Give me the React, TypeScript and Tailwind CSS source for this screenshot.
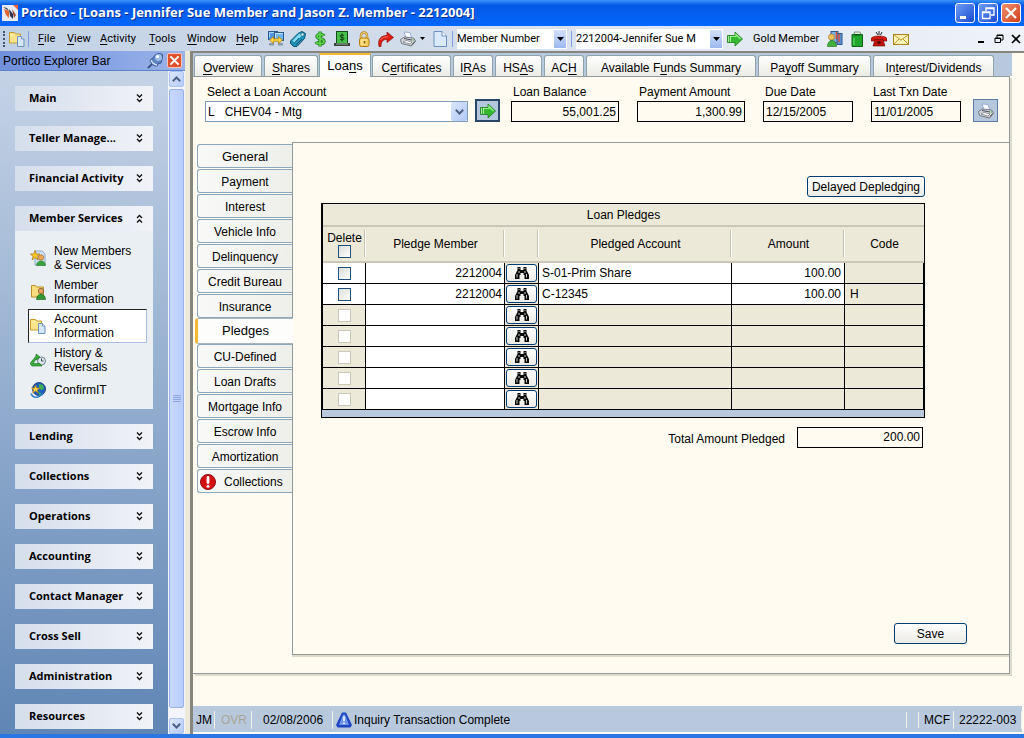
import type { ReactNode } from "react";
import clsx from "clsx";

type IconProps = { className?: string };

function Svg({ children, size = 16, className }: { children: ReactNode; size?: number; className?: string }) {
  return (
    <svg viewBox="0 0 16 16" width={size} height={size} className={clsx("shrink-0", className)} aria-hidden="true">
      {children}
    </svg>
  );
}

function LogoIcon() {
  return (
    <Svg>
      <rect width="16" height="16" fill="#e8eaf2" />
      <path d="M11 0h5v5z" fill="#f0603a" />
      <path d="M2 4l5 2v7L4 10z" fill="#e8622c" />
      <path d="M7 4l4 5v5L8 11z" fill="#2d3350" />
      <path d="M10 4l4 6-2 3z" fill="#9a4636" />
      <path d="M1 2l4 1 2 3z" fill="#39405c" />
    </Svg>
  );
}

function FoldersIcon() {
  return (
    <Svg>
      <path d="M.5 1.500h5l1 1.500h5v9H.5z" fill="#fbe38a" stroke="#c79a2e" />
      <path d="M1 4h4l1-1" stroke="#fff3b8" fill="none" />
      <path d="M8.500 5.500h4l2.500 2.500v7.500h-6.500z" fill="#d6e7fb" stroke="#6d93bf" />
      <path d="M12.500 5.500v2.500h2.500" fill="#fff" stroke="#6d93bf" />
    </Svg>
  );
}

function ComputersIcon() {
  return (
    <Svg>
      <rect x=".5" y=".5" width="9" height="8" fill="#4f98e4" stroke="#2c5a94" />
      <path d="M1.500 6V1.500h6" stroke="#a9d6fb" fill="none" />
      <rect x="6.500" y="1.500" width="9" height="8" fill="#6db4f2" stroke="#2c5a94" />
      <path d="M7.500 7V2.500h7" stroke="#c4e6fd" fill="none" />
      <path d="M1 12h5v2.500H1zM10 12h5v2.500h-5z" fill="#8c9aab" />
      <path d="M1.500 9l4-3.500v2.300h5V5.500l4 3.500-4 3.500v-2.300h-5v2.300z" fill="#ffd43c" stroke="#a87a10" strokeWidth=".7" />
    </Svg>
  );
}

function TagIcon() {
  return (
    <Svg>
      <path d="M.5 10l7.500-7.500 4-2 3.500 2-1 5-7.500 8H3.500l-3-3z" fill="#1f93ba" stroke="#0d5572" />
      <path d="M2.500 9.500l7-7 2.500 2-7.500 7.500z" fill="#7fdcf0" />
      <circle cx="12.500" cy="3.500" r="1.400" fill="#fff" stroke="#0d5572" strokeWidth=".6" />
      <path d="M4 12.500l5-5.500M6 14l6-6" stroke="#0d5572" />
    </Svg>
  );
}

function DollarIcon() {
  return (
    <Svg>
      <path d="M12 5c-1-2-7-2.500-7 .500 0 3 7 1.500 7 5 0 3-7 2.500-8 .300M8 .500v15" fill="none" stroke="#1f7c1f" strokeWidth="3.400" />
      <path d="M12 5c-1-2-7-2.500-7 .500 0 3 7 1.500 7 5 0 3-7 2.500-8 .300M8 1v14" fill="none" stroke="#5fd84c" strokeWidth="1.600" />
    </Svg>
  );
}

function CashIcon() {
  return (
    <Svg>
      <rect x="2.500" y=".5" width="11" height="12" fill="#45c14b" stroke="#124f18" />
      <path d="M10 4.500c-1-1-4-1-4 .500s4 1 4 2.600-3 1.500-4 .400M8 2.500v8" fill="none" stroke="#0c3b10" />
      <path d="M0 12h16v3H0z" fill="#384338" />
      <path d="M2 13h12" stroke="#9fb59f" />
    </Svg>
  );
}

function LockIcon() {
  return (
    <Svg>
      <path d="M5 8V4.500a3 3 0 016 0V8" fill="none" stroke="#b78416" strokeWidth="2.400" />
      <path d="M5 8V4.500a3 3 0 016 0V8" fill="none" stroke="#f3dc9a" />
      <rect x="3.500" y="7" width="9.500" height="8.500" rx="2" fill="#f8cf5c" stroke="#b07a12" />
      <path d="M5 9h5M5 11h3M5 13h5" stroke="#fff2b8" />
      <path d="M8.500 10v2.500" stroke="#7d5306" strokeWidth="1.500" />
    </Svg>
  );
}

function ShareArrowIcon() {
  return (
    <Svg>
      <path d="M1 15.500C-.500 8 3 4.500 9 4.500V1l6.500 5.500L9 11.500V8.500C5 8.300 3 10.500 3 15.500z" fill="#e01c10" stroke="#8c0f08" strokeWidth=".7" />
      <path d="M2.500 9C4 6.500 6 5.800 10 5.800" fill="none" stroke="#ff8a7c" strokeWidth=".8" />
    </Svg>
  );
}

function PrinterIcon({ className }: IconProps) {
  return (
    <Svg className={className}>
      <path d="M4 1l6 .500 2 6.500-6-1z" fill="#f6faff" stroke="#8ba2c4" strokeWidth=".8" />
      <path d="M.5 8.500l4-2.500 9 1 2 3-4 5-10-2.500z" fill="#d3d5da" stroke="#5b616b" strokeWidth=".8" />
      <path d="M4 7.500l8 1.500" stroke="#4a4f58" />
      <path d="M3 11l7 2 2-2-6-1.500z" fill="#fff" stroke="#5b616b" strokeWidth=".6" />
      <path d="M12 13.500l3-3" stroke="#3d424a" />
      <path d="M12.500 9h1.500" stroke="#2fae37" />
    </Svg>
  );
}

function PageIcon() {
  return (
    <Svg>
      <path d="M2 .5h8L14.500 5v10.500H2z" fill="#dbe9fc" stroke="#6b8fc4" />
      <path d="M10 .5V5h4.500" fill="#fff" stroke="#6b8fc4" />
    </Svg>
  );
}

function GoArrowIcon() {
  return (
    <Svg>
      <path d="M.5 4.500h7.500V1L15.500 8 8 15v-3.500H.5z" fill="#33b82f" stroke="#1a7a1a" strokeWidth=".8" />
      <path d="M3 5.500h6V3.500L13.500 8" fill="none" stroke="#9df08f" strokeWidth="1.200" />
      <path d="M1.500 5v6M3.500 5v6" stroke="#c9f7c0" strokeWidth=".8" />
    </Svg>
  );
}

function PeopleIcon() {
  return (
    <Svg>
      <rect x="4" y=".5" width="7" height="11" fill="#7fb2e8" stroke="#2f578e" />
      <rect x="10" y="2.500" width="5" height="11" fill="#5a8fd0" stroke="#2f578e" />
      <path d="M9.500 1v7M12 3v8" stroke="#d8533a" strokeWidth="1.500" />
      <circle cx="4.500" cy="6" r="3" fill="#f3c25b" stroke="#a06a1f" strokeWidth=".6" />
      <path d="M.5 15.500c0-8 9-8 9 0z" fill="#3fae3b" stroke="#1c6b1a" strokeWidth=".6" />
    </Svg>
  );
}

function BagIcon() {
  return (
    <Svg>
      <path d="M4.500 5l1-4H11l1.500 4" fill="#e6efe2" stroke="#7b927b" />
      <path d="M3 3.500h10.500v12H3z" fill="#1fa52b" stroke="#0c6817" />
      <path d="M5 4h6" stroke="#0b4d12" />
      <path d="M5 7v7" stroke="#73e07c" />
    </Svg>
  );
}

function PhoneIcon() {
  return (
    <Svg>
      <path d="M0 8c0-4 16-4 16 0v2h-4V8.500H4V10H0z" fill="#d81810" stroke="#6c0905" strokeWidth=".6" />
      <path d="M4 8.500h8l2 6.500H2z" fill="#c3140d" stroke="#6c0905" strokeWidth=".6" />
      <circle cx="8" cy="11.500" r="1.800" fill="#5e0a06" />
      <path d="M5 1l2 3M8 0v4M11 1L9.500 4" stroke="#222" />
    </Svg>
  );
}

function MailIcon() {
  return (
    <Svg>
      <rect x=".5" y="3.500" width="15" height="10" fill="#fdf3b4" stroke="#a8841a" />
      <path d="M1 4l7 5 7-5M1 13l5-5M15 13l-5-5" fill="none" stroke="#c09a2a" />
    </Svg>
  );
}

function PinIcon() {
  return (
    <Svg>
      <path d="M1 15l5-5" stroke="#3b5688" strokeWidth="2" />
      <path d="M3 7c1 4 3 6 7 6l1-2 3-1 2-8-4-2-4 2-2 3z" fill="#5c82bf" stroke="#2b4a80" strokeWidth=".8" />
      <path d="M4 7c1 3 3 4.500 6 5" fill="none" stroke="#cfe0f7" strokeWidth="1.400" />
      <circle cx="11.500" cy="4.500" r="3.500" fill="#9dbbe6" />
      <circle cx="10.500" cy="3.500" r="1.600" fill="#fff" />
    </Svg>
  );
}

function BinocularsIcon() {
  return (
    <Svg>
      <path d="M3.500 2h3v3h3V2h3v3l2.500 5v4h-4.500v-4h-1V8h-3v2h-1v4H1v-4l2.500-5z" fill="#0a0a0a" />
      <path d="M4.500 3.500h1M10.500 3.500h1M3 9v3.500M12.500 9v3.500M5 6v2M11 6v2" stroke="#c4c4c4" />
    </Svg>
  );
}

function NewMemberIcon() {
  return (
    <Svg>
      <path d="M5 1h7l3 3v11H5z" fill="#cfe2f8" stroke="#8aa8cf" />
      <circle cx="11" cy="7.500" r="2.700" fill="#eea656" stroke="#9c6420" strokeWidth=".6" />
      <path d="M6.500 15.500c0-6 9-6 9 0z" fill="#37a33a" stroke="#1c6b1a" strokeWidth=".5" />
      <path d="M5 .5l1.300 3.500h3.500L7 6.300l1 3.700-3-2.300L2 10l1-3.700L.3 4h3.400z" fill="#ffc62e" stroke="#a8730a" strokeWidth=".7" />
    </Svg>
  );
}

function MemberInfoIcon() {
  return (
    <Svg>
      <path d="M1.500 1.500h4l1 1.500h7v10h-12z" fill="#f9dd7c" stroke="#bd9128" />
      <circle cx="11" cy="7" r="2.700" fill="#e7a25c" stroke="#77583a" strokeWidth=".8" />
      <path d="M6.500 15.500c0-7 9-7 9 0z" fill="#2f9a33" stroke="#1c5b1a" strokeWidth=".6" />
    </Svg>
  );
}

function HistoryIcon() {
  return (
    <Svg>
      <circle cx="11.500" cy="9" r="4" fill="#dfe7ee" stroke="#6f7f90" />
      <path d="M11.500 6.500V9h2" fill="none" stroke="#3b4855" />
      <path d="M12 14H2l-2-2.500L6 4V2l4 3-3.500 3V6.500L3 11.500h7z" fill="#36b03b" stroke="#176a1b" strokeWidth=".6" />
    </Svg>
  );
}

function GlobeIcon() {
  return (
    <Svg>
      <circle cx="9" cy="7" r="6.500" fill="#1c5fc0" stroke="#0c2c66" strokeWidth=".8" />
      <path d="M9 2l4 1 1 4-3 1-2-2zM8 10l3 1-1 3z" fill="#3fae52" />
      <path d="M5.500 3l1.200 3h3L7.300 8l1 3-2.800-2-2.800 2 1-3L1.300 6h3z" fill="#ffd34a" stroke="#a8730a" strokeWidth=".6" />
      <path d="M1 11.500c1 3 4 4 7 3.500l5-3" fill="none" stroke="#2f83c9" strokeWidth="1.500" />
    </Svg>
  );
}

function ErrorIcon() {
  return (
    <Svg>
      <circle cx="8" cy="8" r="7.500" fill="#d41010" stroke="#8b0a0a" />
      <path d="M8 3.500v5" stroke="#fff" strokeWidth="2.800" strokeLinecap="round" />
      <circle cx="8" cy="12.300" r="1.500" fill="#fff" />
    </Svg>
  );
}

function AlertIcon() {
  return (
    <Svg>
      <path d="M6 .5h4L16 13l-1.500 2.500h-13L0 13z" fill="#1f46c0" />
      <path d="M7 2.500h2L13 13H3z" fill="#6f97f0" />
      <path d="M8 4.500v4.500M8 10.500v1.500" stroke="#fff" strokeWidth="1.600" />
    </Svg>
  );
}

function DoubleChevron({ up = false }: { up?: boolean }) {
  return (
    <svg viewBox="0 0 7 9" width="7" height="9" className={clsx("shrink-0", up && "rotate-180")} aria-hidden="true">
      <path d="M1 .500l2.500 2.500L6 .500M1 5l2.500 2.500L6 5" fill="none" stroke="#111" strokeWidth="1.400" />
    </svg>
  );
}

function Chevron({ up = false }: { up?: boolean }) {
  return (
    <svg viewBox="0 0 9 6" width="9" height="6" className={up ? "rotate-180" : ""} aria-hidden="true">
      <path d="M.8 .800l3.700 3.700L8.200 .800" fill="none" stroke="#4d6185" strokeWidth="2" />
    </svg>
  );
}

// Renders a label with the character at `at` underlined as its access key.
function Mnemonic({ text, at }: { text: string; at: number }) {
  return (
    <span>
      {text.slice(0, at)}
      <span className="underline underline-offset-2">{text[at]}</span>
      {text.slice(at + 1)}
    </span>
  );
}

const MENUS = [
  { label: "File", width: "w-[29px]" },
  { label: "View", width: "w-[33px]" },
  { label: "Activity", width: "w-[49px]" },
  { label: "Tools", width: "w-[38px]" },
  { label: "Window", width: "w-[49px]" },
  { label: "Help", width: "w-[32px]" },
];

const TOOLS = [
  { name: "Connections", icon: <ComputersIcon /> },
  { name: "Tags", icon: <TagIcon /> },
  { name: "Payments", icon: <DollarIcon /> },
  { name: "Cash drawer", icon: <CashIcon /> },
  { name: "Lock", icon: <LockIcon /> },
  { name: "Forward", icon: <ShareArrowIcon /> },
];

const MEMBER_TOOLS = [
  { name: "Household", icon: <PeopleIcon /> },
  { name: "Products", icon: <BagIcon /> },
  { name: "Phone", icon: <PhoneIcon /> },
  { name: "Mail", icon: <MailIcon /> },
];

const TABS = [
  { label: "Overview", at: 0, width: "w-[68px]" },
  { label: "Shares", at: 0, width: "w-[54px]" },
  { label: "Loans", at: 3, width: "w-[52px]" },
  { label: "Certificates", at: 1, width: "w-[79px]" },
  { label: "IRAs", at: 1, width: "w-[40px]" },
  { label: "HSAs", at: 2, width: "w-[47px]" },
  { label: "ACH", at: 2, width: "w-[40px]" },
  { label: "Available Funds Summary", at: 11, width: "w-[170px]" },
  { label: "Payoff Summary", at: 2, width: "w-[113px]" },
  { label: "Interest/Dividends", at: 2, width: "w-[121px]" },
];

const SIDE_TABS = [
  "General",
  "Payment",
  "Interest",
  "Vehicle Info",
  "Delinquency",
  "Credit Bureau",
  "Insurance",
  "Pledges",
  "CU-Defined",
  "Loan Drafts",
  "Mortgage Info",
  "Escrow Info",
  "Amortization",
  "Collections",
];

const SERVICES = [
  { lines: ["New Members", "& Services"], icon: <NewMemberIcon /> },
  { lines: ["Member", "Information"], icon: <MemberInfoIcon /> },
  { lines: ["Account", "Information"], icon: <FoldersIcon />, active: true },
  { lines: ["History &", "Reversals"], icon: <HistoryIcon /> },
  { lines: ["ConfirmIT"], icon: <GlobeIcon /> },
];

const GROUPS = [
  "Main",
  "Teller Manage...",
  "Financial Activity",
  "Member Services",
  "Lending",
  "Collections",
  "Operations",
  "Accounting",
  "Contact Manager",
  "Cross Sell",
  "Administration",
  "Resources",
];

const PLEDGES = [
  { member: "2212004", account: "S-01-Prim Share", amount: "100.00", code: "" },
  { member: "2212004", account: "C-12345", amount: "100.00", code: "H" },
  null,
  null,
  null,
  null,
  null,
];

function TitleBar() {
  const button = "flex h-5 w-5 items-center justify-center rounded-[3px] border border-white";
  return (
    <header className="flex h-[26px] items-center gap-[3px] bg-linear-to-b from-[#3b93fc] via-[#0458e6] via-20% to-[#0367fd] pl-[2px] pr-[3px]">
      <LogoIcon />
      <h1 className="grow truncate font-['Open_Sans','Noto_Sans',sans-serif] text-[13px] font-bold text-white [text-shadow:1px_1px_#0b2f8f]">
        Portico - [Loans - Jennifer Sue Member and Jason Z. Member - 2212004]
      </h1>
      <button aria-label="Minimize" className={clsx(button, "bg-linear-to-br from-[#6e9bf5] to-[#1c49cf]")}>
        <Svg>
          <path d="M3 11h6v3H3z" fill="#fff" />
        </Svg>
      </button>
      <button aria-label="Restore" className={clsx(button, "bg-linear-to-br from-[#6e9bf5] to-[#1c49cf]")}>
        <Svg>
          <path d="M6 6V3h8v7h-3M6 3.500h8M2.500 7h7.500v6.500H2.500zM2 7.500h8" fill="none" stroke="#fff" strokeWidth="1.300" />
        </Svg>
      </button>
      <button aria-label="Close" className={clsx(button, "bg-linear-to-br from-[#f0906e] to-[#cf3a12]")}>
        <Svg>
          <path d="M3 3l10 10M13 3L3 13" stroke="#fff" strokeWidth="2.200" />
        </Svg>
      </button>
    </header>
  );
}

function ToolbarSelect({ label, value, className }: { label: string; value: string; className: string }) {
  return (
    <div className={clsx("relative h-5 shrink-0", className)}>
      <select aria-label={label} className="h-full w-full appearance-none bg-white pt-[2px] text-[11px] outline-none">
        <option>{value}</option>
      </select>
      <span className="pointer-events-none absolute right-px top-px flex h-[18px] w-3 items-center justify-center bg-linear-to-b from-[#d3e0fa] to-[#9db9f0]">
        <svg viewBox="0 0 7 4" width="7" height="4" aria-hidden="true">
          <path d="M0 0h7L3.500 4z" />
        </svg>
      </span>
    </div>
  );
}

function MenuBar() {
  return (
    <div className="flex h-[25px] items-center bg-linear-to-r from-[#c1d1e5] via-[#d4deec] via-45% to-[#eff3f9] font-[Roboto,'Liberation_Sans',sans-serif] text-[11px]">
      <span className="ml-[3px] mr-1 h-4 w-[2px] border-l-2 border-dotted border-[#44546b]" />
      <FoldersIcon />
      <span className="ml-[3px] mr-[9px] h-4 w-px bg-[#7f9fdc]" />
      <nav className="flex">
        {MENUS.map((menu) => (
          <button key={menu.label} className={clsx("pt-[2px] text-left", menu.width)}>
            <Mnemonic text={menu.label} at={0} />
          </button>
        ))}
      </nav>
      <div className="flex gap-[6px]">
        {TOOLS.map((tool) => (
          <button key={tool.name} aria-label={tool.name}>
            {tool.icon}
          </button>
        ))}
        <button aria-label="Print" className="flex items-center gap-1 pr-px">
          <PrinterIcon />
          <svg viewBox="0 0 5 3" width="5" height="3" aria-hidden="true">
            <path d="M0 0h5L2.500 3z" />
          </svg>
        </button>
        <button aria-label="New page">
          <PageIcon />
        </button>
      </div>
      <span className="mx-1 h-4 w-px bg-[#7f9fdc]" />
      <ToolbarSelect label="Search by" value="Member Number" className="w-[110px]" />
      <span className="mx-1 h-4 w-px bg-[#7f9fdc]" />
      <ToolbarSelect label="Member" value="2212004-Jennifer Sue M" className="w-[147px]" />
      <button aria-label="Go to member" className="ml-1">
        <GoArrowIcon />
      </button>
      <span className="ml-[10px] mr-2 shrink-0 pt-[2px]">Gold Member</span>
      <div className="flex gap-[6px]">
        {MEMBER_TOOLS.map((tool) => (
          <button key={tool.name} aria-label={tool.name}>
            {tool.icon}
          </button>
        ))}
      </div>
      <div className="ml-auto mr-[3px] flex gap-[7px]">
        <button aria-label="Minimize window">
          <svg viewBox="0 0 10 10" width="10" height="10" aria-hidden="true">
            <path d="M1 7h6v2H1z" />
          </svg>
        </button>
        <button aria-label="Restore window">
          <svg viewBox="0 0 10 10" width="10" height="10" aria-hidden="true">
            <path d="M3 4V1h6v5H7M3 1.500h6M1 4h5.500v4.500H1zM1 4.500h5.500" fill="none" stroke="#000" />
          </svg>
        </button>
        <button aria-label="Close window">
          <svg viewBox="0 0 10 10" width="10" height="10" aria-hidden="true">
            <path d="M1 1l8 8M9 1L1 9" stroke="#000" strokeWidth="1.700" />
          </svg>
        </button>
      </div>
    </div>
  );
}

function ScrollBar() {
  const arrow = "flex h-4 w-[15px] items-center justify-center rounded-[2px] border border-[#a9c1f4] bg-linear-to-br from-[#dfe8fd] to-[#b4caf8]";
  return (
    <div className="flex w-[17px] shrink-0 flex-col items-center bg-[#f4f5fc]">
      <button aria-label="Scroll up" className={arrow}>
        <Chevron up />
      </button>
      <div className="mt-[2px] mb-[10px] flex w-[15px] grow flex-col items-center justify-center gap-px rounded-[2px] border border-[#98b0ea] bg-linear-to-r from-[#c9d8fd] to-[#b9cdfa]">
        <span className="h-px w-2 bg-[#8aa5e0]" />
        <span className="h-px w-2 bg-[#8aa5e0]" />
        <span className="h-px w-2 bg-[#8aa5e0]" />
        <span className="h-px w-2 bg-[#8aa5e0]" />
      </div>
      <button aria-label="Scroll down" className={arrow}>
        <Chevron />
      </button>
    </div>
  );
}

function ExplorerBar() {
  return (
    <aside className="flex w-[185px] shrink-0 flex-col">
      <div className="flex h-5 items-center gap-1 border-b border-[#5c82cc] bg-linear-to-r from-[#7090dc] to-[#9ab2ea] pl-[3px] pr-[3px]">
        <h2 className="grow text-[12px]">Portico Explorer Bar</h2>
        <button aria-label="Auto hide">
          <PinIcon />
        </button>
        <button aria-label="Close explorer bar" className="flex h-[15px] w-[15px] items-center justify-center rounded-[2px] border border-[#f8c7b5] bg-[#e1502a]">
          <Svg size={11}>
            <path d="M2 2l12 12M14 2L2 14" stroke="#fff" strokeWidth="3" />
          </Svg>
        </button>
      </div>
      <div className="flex grow">
        <div className="flex grow flex-col gap-[15px] bg-linear-to-b from-[#c5d3e6] to-[#6086b5] px-[15px] pb-[5px] pt-[15px]">
          {GROUPS.map((group) => {
            const open = group === "Member Services";
            return (
              <section key={group}>
                <button
                  aria-expanded={open}
                  className="flex h-[25px] w-full items-center justify-between bg-linear-to-r from-[#d5deec] to-[#f1f3f8] pl-[14px] pr-[10px] font-['Open_Sans','Noto_Sans',sans-serif] text-[11px] font-bold whitespace-nowrap"
                >
                  {group}
                  <DoubleChevron up={open} />
                </button>
                {open && (
                  <ul className="bg-[#eaeff4] pb-[6px] pl-[13px] pr-[6px] pt-[10px]">
                    {SERVICES.map((item) => (
                      <li key={item.lines[0]}>
                        <a
                          href="#"
                          className={clsx(
                            "flex items-center gap-2 border pl-px text-[12px] leading-[14px]",
                            item.lines.length > 1 ? "h-[34px]" : "h-[26px]",
                            item.active ? "border-b-[#a9bfdf] border-l-[#222] border-r-[#a9bfdf] border-t-[#222] bg-white" : "border-transparent",
                          )}
                        >
                          {item.icon}
                          <span>
                            {item.lines.map((line) => (
                              <span key={line} className="block">
                                {line}
                              </span>
                            ))}
                          </span>
                        </a>
                      </li>
                    ))}
                  </ul>
                )}
              </section>
            );
          })}
        </div>
        <ScrollBar />
      </div>
    </aside>
  );
}

function LoanTabs() {
  return (
    <div role="tablist" className="flex h-[23px] items-end gap-[2px] pl-px">
      {TABS.map((tab) =>
        tab.label === "Loans" ? (
          <button
            key={tab.label}
            role="tab"
            aria-selected="true"
            className={clsx("relative -mx-px -mb-px h-6 border-x border-t-2 border-x-[#8fa3ad] border-t-[#f5b833] bg-[#fdfdfb] text-[13px]", tab.width)}
          >
            <Mnemonic text={tab.label} at={tab.at} />
          </button>
        ) : (
          <button
            key={tab.label}
            role="tab"
            aria-selected="false"
            className={clsx("h-[21px] rounded-t-[3px] border border-b-0 border-[#8fa3ad] bg-linear-to-b from-white to-[#ecece6] pt-[3px] text-[12px] whitespace-nowrap", tab.width)}
          >
            <Mnemonic text={tab.label} at={tab.at} />
          </button>
        ),
      )}
    </div>
  );
}

function ReadOnlyField({ id, label, value, className }: { id: string; label: string; value: string; className: string }) {
  return (
    <div className={className}>
      <label htmlFor={id} className="block h-[17px] pl-[2px] leading-4 whitespace-nowrap">
        {label}
      </label>
      <input
        id={id}
        readOnly
        defaultValue={value}
        className={clsx("block h-[21px] w-full border border-black bg-transparent px-[2px] outline-none", value.includes(".") && "text-right")}
      />
    </div>
  );
}

function AccountHeader() {
  return (
    <div className="flex items-end pb-5 pl-3 pt-[7px]">
      <div className="w-[263px]">
        <label htmlFor="loan-account" className="block h-[17px] pl-[2px] leading-4">
          Select a Loan Account
        </label>
        <div className="relative">
          <select id="loan-account" className="block h-[21px] w-full appearance-none border border-[#7f9db9] bg-white pl-[2px] outline-none">
            <option>{"L\u00a0\u00a0 CHEV04 - Mtg"}</option>
          </select>
          <span className="pointer-events-none absolute right-px top-px flex h-[19px] w-4 items-center justify-center rounded-[2px] bg-linear-to-br from-[#dbe6fd] to-[#b1c7f5]">
            <Chevron />
          </span>
        </div>
      </div>
      <button aria-label="Open account" className="ml-[7px] mr-[11px] flex h-[23px] w-[25px] items-center justify-center border-2 border-[#274668] bg-[#b5c7dd]">
        <GoArrowIcon />
      </button>
      <ReadOnlyField id="balance" label="Loan Balance" value="55,001.25" className="mr-[18px] w-[108px]" />
      <ReadOnlyField id="payment" label="Payment Amount" value="1,300.99" className="mr-[18px] w-[108px]" />
      <ReadOnlyField id="due" label="Due Date" value="12/15/2005" className="mr-[18px] w-[90px]" />
      <ReadOnlyField id="last-txn" label="Last Txn Date" value="11/01/2005" className="mr-3 w-[90px]" />
      <button aria-label="Print loan" className="flex h-[23px] w-[25px] items-center justify-center border border-[#5c7ea6] bg-[#b5c7dd]">
        <PrinterIcon />
      </button>
    </div>
  );
}

function SideTabs() {
  return (
    <div role="tablist" aria-orientation="vertical" className="flex w-[99px] shrink-0 flex-col gap-px pl-1 pt-[2px]">
      {SIDE_TABS.map((label) => {
        if (label === "Pledges") {
          return (
            <button
              key={label}
              role="tab"
              aria-selected="true"
              className="relative -my-px -ml-[2px] -mr-px h-[26px] rounded-l-[3px] border-y border-l-[3px] border-y-[#a9b6ba] border-l-[#f5b833] bg-[#fdfdfb] text-[13px]"
            >
              {label}
            </button>
          );
        }
        return (
          <button
            key={label}
            role="tab"
            aria-selected="false"
            className={clsx(
              "flex h-6 items-center rounded-l-[3px] border border-r-0 border-[#8ca8bf] bg-linear-to-r from-[#f9faf8] to-[#eeeeea] pt-[2px]",
              label === "General" ? "text-[13px]" : "text-[12px]",
              label === "Collections" ? "gap-2 pl-[2px]" : "justify-center",
            )}
          >
            {label === "Collections" && <ErrorIcon />}
            {label}
          </button>
        );
      })}
    </div>
  );
}

function Checkbox({ label, disabled = false }: { label: string; disabled?: boolean }) {
  return (
    <input
      type="checkbox"
      aria-label={label}
      disabled={disabled}
      className="mx-auto block h-[13px] w-[13px] appearance-none border border-[#1c5180] bg-linear-to-br from-[#dcdcd7] to-white disabled:border-[#cac8bb] disabled:bg-white disabled:bg-none"
    />
  );
}

function PledgeTable() {
  const head = "border-b-2 border-b-[#cbc7b8] font-normal";
  const divided = "after:absolute after:bottom-1 after:right-0 after:top-[3px] after:w-[2px] after:border-l after:border-[#c7c5b2] after:bg-white";
  const cell = "h-[21px] border-b border-r border-black p-0";
  return (
    <div className="border border-black bg-[#b8c9de] pb-[7px]">
      <table className="w-full table-fixed border-separate border-spacing-0 border-l border-black bg-[#ece9d8]">
        <colgroup>
          <col className="w-[43px]" />
          <col className="w-[139px]" />
          <col className="w-[34px]" />
          <col />
          <col className="w-[113px]" />
          <col className="w-[79px]" />
        </colgroup>
        <thead>
          <tr>
            <th colSpan={6} className={clsx(head, "h-[23px] p-0 leading-5")}>
              Loan Pledges
            </th>
          </tr>
          <tr>
            <th className={clsx(head, divided, "relative h-9 p-0 leading-[14px]")}>
              Delete
              <Checkbox label="Delete all" />
            </th>
            <th className={clsx(head, divided, "relative p-0")}>Pledge Member</th>
            <th className={clsx(head, divided, "relative p-0")} />
            <th className={clsx(head, divided, "relative p-0")}>Pledged Account</th>
            <th className={clsx(head, divided, "relative p-0")}>Amount</th>
            <th className={clsx(head, "p-0")}>Code</th>
          </tr>
        </thead>
        <tbody>
          {PLEDGES.map((pledge, i) => (
            <tr key={i}>
              <td className={clsx(cell, pledge && "bg-white")}>
                <Checkbox label={`Delete row ${i + 1}`} disabled={!pledge} />
              </td>
              <td className={clsx(cell, "bg-white")}>
                <input
                  aria-label={`Pledge member ${i + 1}`}
                  defaultValue={pledge?.member}
                  className="block h-5 w-full bg-transparent pr-[2px] text-right outline-none"
                />
              </td>
              <td className={cell}>
                <button
                  aria-label={`Find member ${i + 1}`}
                  className="mx-px flex h-[18px] w-[31px] items-center justify-center rounded-[3px] border border-[#003c74] bg-linear-to-b from-white to-[#ecebe5]"
                >
                  <BinocularsIcon />
                </button>
              </td>
              <td className={clsx(cell, "pl-[3px]", pledge && "bg-white")}>{pledge?.account}</td>
              <td className={clsx(cell, "pr-[3px] text-right", pledge && "bg-white")}>{pledge?.amount}</td>
              <td className={clsx(cell, "pl-[5px]")}>{pledge?.code}</td>
            </tr>
          ))}
        </tbody>
      </table>
    </div>
  );
}

function PledgePanel() {
  const button = "h-[21px] rounded-[3px] border border-[#003c74] bg-linear-to-b from-white to-[#ecebe5] pt-px";
  return (
    <section className="flex grow flex-col border-b border-l border-t border-[#919b9c] pb-[10px] pl-7 pr-[42px] pt-[33px] shadow-[0_2px_0_#dedbc9]">
      <div className="pr-[42px]">
        <div className="mb-[6px] flex justify-end">
          <button className={clsx(button, "w-[118px]")}>Delayed Depledging</button>
        </div>
        <PledgeTable />
        <div className="mt-2 flex items-center justify-end gap-3 pr-[2px]">
          <label htmlFor="total" className="pt-1">
            Total Amount Pledged
          </label>
          <input id="total" readOnly defaultValue="200.00" className="h-[21px] w-[126px] border border-black bg-transparent px-[2px] text-right outline-none" />
        </div>
      </div>
      <div className="mt-auto flex justify-end">
        <button className={clsx(button, "w-[73px]")}>Save</button>
      </div>
    </section>
  );
}

function StatusBar() {
  const cell = "border-r border-[#f3f1e6]";
  return (
    <footer className="mb-[2px] mr-[2px] flex h-[26px] items-center bg-[#b8c9de] pt-[2px] text-[12px]">
      <span className={clsx(cell, "w-[22px] pl-[3px]")}>JM</span>
      <span className={clsx(cell, "w-[37px] pl-[6px] text-[#a9a695]")}>OVR</span>
      <span className={clsx(cell, "w-[81px] pl-[11px]")}>02/08/2006</span>
      <span className="flex grow items-center gap-[2px] pl-[3px]">
        <AlertIcon />
        Inquiry Transaction Complete
      </span>
      <span className={clsx(cell, "h-4")} />
      <span className={clsx(cell, "h-4 w-3")} />
      <span className={clsx(cell, "w-[35px] pl-[5px]")}>MCF</span>
      <span className={clsx(cell, "w-[68px] pl-[5px]")}>22222-003</span>
    </footer>
  );
}

export default function App() {
  return (
    <div className="flex min-h-screen flex-col border-b-4 border-[#2a76e4] bg-[#ece9d8] font-['Liberation_Sans',Arial,sans-serif] text-[12px] text-black">
      <TitleBar />
      <MenuBar />
      <div className="flex grow">
        <ExplorerBar />
        <main className="ml-[5px] flex min-w-0 grow flex-col border-l-[3px] border-t-2 border-[#87857c] bg-[#fffbf0]">
          <div className="mr-3 bg-[#b8c9de]">
            <LoanTabs />
          </div>
          <div className="mb-8 mr-[14px] flex grow flex-col border-b border-r border-t border-[#919b9c] pb-[18px] shadow-[2px_2px_0_#dedbc9]">
            <AccountHeader />
            <div className="flex grow">
              <SideTabs />
              <PledgePanel />
            </div>
          </div>
          <StatusBar />
        </main>
      </div>
    </div>
  );
}
